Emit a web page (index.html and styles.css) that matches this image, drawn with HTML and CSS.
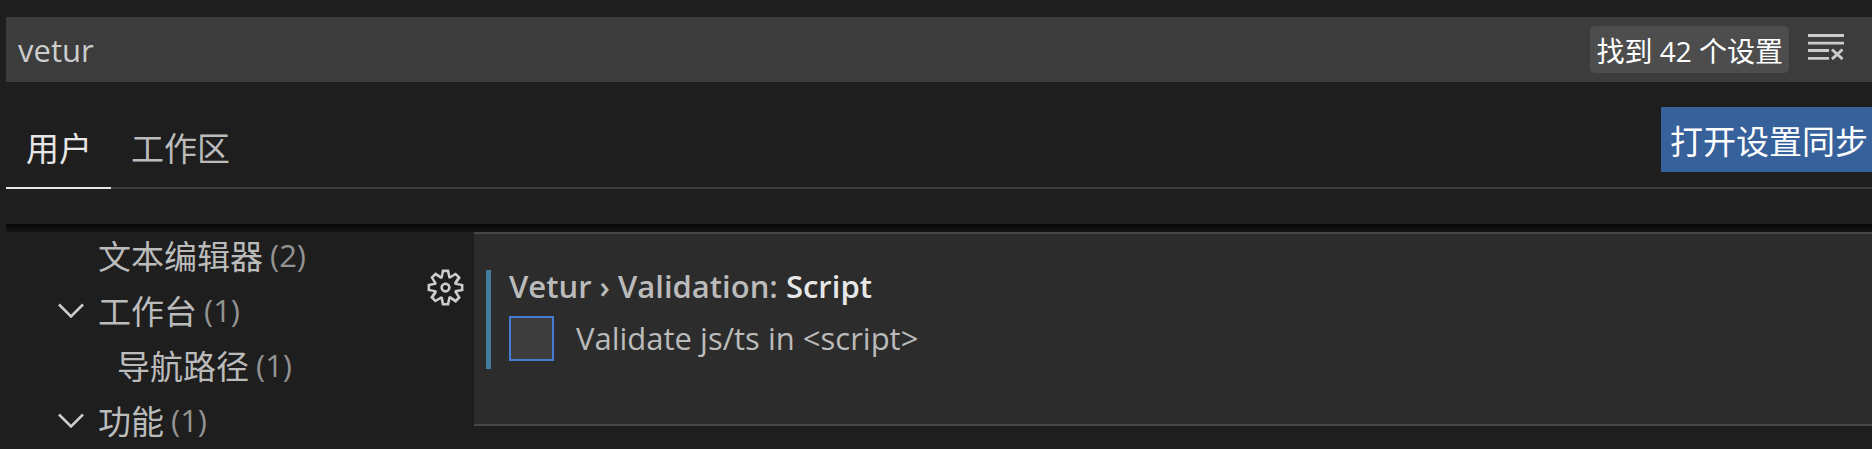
FILE: index.html
```html
<!DOCTYPE html>
<html lang="zh-CN">
<head>
<meta charset="utf-8">
<title>设置</title>
<link rel="stylesheet" href="styles.css">
</head>
<body>
<main class="settings">
  <div class="search">
    <input class="search-input" type="text" value="vetur" aria-label="搜索设置">
    <span class="badge">找到 42 个设置</span>
    <button class="icon-button clear-button" type="button" aria-label="清除搜索结果">
      <svg class="clear-icon" viewBox="0 0 36 26" aria-hidden="true">
        <path d="M0 1.5h36M0 9.2h36M0 16.5h21M0 24.4h21" stroke-width="2.8"/>
        <path d="M24 15.5l10.5 9.5M34.500 15.5L24 25" stroke-width="3"/>
      </svg>
    </button>
  </div>
  <header class="tabs-row">
    <nav class="tabs">
      <button class="tab active" type="button">用户</button>
      <button class="tab" type="button">工作区</button>
    </nav>
    <button class="sync" type="button">打开设置同步</button>
  </header>
  <div class="shadow"></div>
  <div class="content">
    <nav class="tree">
      <a class="row" href="#editor"><span class="twistie"></span>文本编辑器<span class="count">(2)</span></a>
      <a class="row" href="#workbench"><span class="twistie"><svg class="chevron" viewBox="0 0 26 15" aria-hidden="true"><path d="M1 1.500l12 12 12-12"/></svg></span>工作台<span class="count">(1)</span></a>
      <a class="row child" href="#breadcrumbs"><span class="twistie"></span>导航路径<span class="count">(1)</span></a>
      <a class="row" href="#features"><span class="twistie"><svg class="chevron" viewBox="0 0 26 15" aria-hidden="true"><path d="M1 1.500l12 12 12-12"/></svg></span>功能<span class="count">(1)</span></a>
    </nav>
    <button class="icon-button gear-button" type="button" aria-label="更多操作">
      <svg class="gear" viewBox="0 0 16 16" aria-hidden="true"><path fill-rule="evenodd" d="M9.1 4.4L8.6 2H7.4l-.5 2.4-.7.3-2-1.3-.9.8 1.3 2-.2.7-2.4.5v1.200l2.4.5.3.8-1.3 2 .8.8 2-1.300.8.3.4 2.300h1.200l.5-2.400.8-.3 2 1.300.8-.8-1.300-2 .3-.8 2.300-.4V7.400l-2.400-.5-.3-.8 1.300-2-.8-.8-2 1.300-.7-.2zM9.400 1l.5 2.400L12 2.100l2 2-1.400 2.100 2.400.4v2.800l-2.400.5L14 12l-2 2-2.100-1.400-.5 2.400H6.600l-.5-2.400L4 13.900l-2-2 1.400-2.100L1 9.400V6.600l2.400-.5L2.100 4l2-2 2.100 1.400.4-2.400h2.800zm.6 7c0 1.100-.9 2-2 2s-2-.9-2-2 .9-2 2-2 2 .9 2 2zM8 9c.6 0 1-.4 1-1s-.4-1-1-1-1 .4-1 1 .4 1 1 1z"/></svg>
    </button>
    <section class="card">
      <div class="setting">
        <h2 class="title">Vetur › Validation: <span class="name">Script</span></h2>
        <label class="option"><input class="check" type="checkbox">Validate js/ts in &lt;script&gt;</label>
      </div>
    </section>
  </div>
</main>
</body>
</html>
```

FILE: styles.css
```css
* {
  box-sizing: border-box;
}

body {
  margin: 0;
  background: #1e1e1e;
  color: #bbb;
  font-family: "Open Sans", "Noto Sans CJK SC", sans-serif;
  font-size: 31px;
}

button,
input {
  margin: 0;
  padding: 0;
  border: 0;
  background: none;
  color: inherit;
  font: inherit;
}

.settings {
  padding: 17px 0 0 6px;
}

.search {
  display: flex;
  align-items: center;
  height: 65px;
  padding: 0 28px 0 12px;
  background: #3c3c3c;
  color: #ccc;
}

.search-input {
  flex: 1;
  min-width: 0;
  outline: 0;
}

.badge {
  height: 47px;
  margin-right: 19px;
  padding: 2px 6px 0;
  border-radius: 5px;
  background: #4d4d4d;
  color: #fff;
  font-size: 28px;
  line-height: 47px;
  white-space: nowrap;
}

.icon-button {
  display: flex;
}

.clear-button {
  padding-bottom: 5px;
}

.clear-icon {
  width: 36px;
  height: 26px;
  fill: none;
  stroke: #ccc;
}

.tabs-row {
  display: flex;
  align-items: flex-start;
  justify-content: space-between;
  height: 107px;
  padding-top: 25px;
  border-bottom: 2px solid #3c3c3c;
  font-size: 33px;
  line-height: 65px;
}

.tabs {
  display: flex;
}

.tab {
  height: 82px;
  padding: 2px 19px 0 20px;
  border-bottom: 2px solid transparent;
}

.tab.active {
  border-color: #e7e7e7;
  color: #e7e7e7;
}

.sync {
  height: 65px;
  padding: 2px 4px 0 9px;
  background: #37619b;
  color: #fff;
}

.shadow {
  height: 8px;
  margin-top: 35px;
  background: linear-gradient(#070707, #161616);
}

.content {
  display: flex;
  align-items: flex-start;
}

.tree {
  width: 422px;
  margin-top: -5px;
}

.row {
  display: flex;
  align-items: center;
  height: 55px;
  color: inherit;
  font-size: 33px;
  text-decoration: none;
  white-space: nowrap;
}

.twistie {
  width: 92px;
  padding: 2px 0 0 52px;
}

.child .twistie {
  width: 111px;
}

.chevron {
  display: block;
  width: 26px;
  height: 15px;
  fill: none;
  stroke: #ccc;
  stroke-width: 2.5;
}

.count {
  margin-left: 7px;
  color: #939393;
  font-size: 31px;
}

.gear-button {
  flex: none;
  width: 46px;
  margin-top: 35px;
}

.gear {
  flex: none;
  width: 41px;
  height: 41px;
  margin-left: -3px;
  fill: #ccc;
}

.card {
  flex: 1;
  height: 194px;
  padding: 36px 12px;
  border-top: 2px solid #474747;
  border-bottom: 2px solid #474747;
  background: #2c2c2c;
}

.setting {
  height: 99px;
  padding-left: 18px;
  border-left: 5px solid #457b9d;
}

.title {
  margin: 0;
  font-size: 31px;
  font-weight: 600;
  line-height: 32px;
}

.name {
  color: #e7e7e7;
}

.option {
  display: flex;
  align-items: center;
  gap: 22px;
  margin-top: 14px;
  line-height: 45px;
}

.check {
  width: 45px;
  height: 45px;
  appearance: none;
  border: 2px solid #457dd6;
  background: #3c3c3c;
}
```
